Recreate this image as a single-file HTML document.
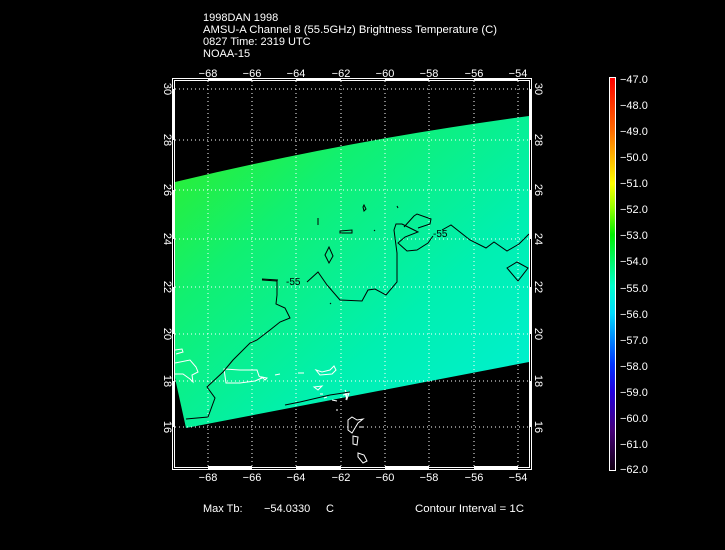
<!DOCTYPE html>
<html><head><meta charset="utf-8"><style>
html,body{margin:0;padding:0;background:#000;}
svg{display:block}
text{font-family:"Liberation Sans",sans-serif;fill:#fff;font-size:11px}
</style></head><body>
<svg width="725" height="550" viewBox="0 0 725 550" xmlns="http://www.w3.org/2000/svg">
<defs>
<linearGradient id="sw" x1="0" y1="0" x2="1" y2="1">
<stop offset="0" stop-color="#33ee22"/>
<stop offset="0.3" stop-color="#11f070"/>
<stop offset="0.65" stop-color="#00f0b0"/>
<stop offset="1" stop-color="#00f0d8"/>
</linearGradient>
<linearGradient id="cb" x1="0" y1="0" x2="0" y2="1">
<stop offset="0" stop-color="#ff0000"/>
<stop offset="0.13" stop-color="#ff6600"/>
<stop offset="0.27" stop-color="#ffff00"/>
<stop offset="0.33" stop-color="#99ff00"/>
<stop offset="0.4" stop-color="#00ee00"/>
<stop offset="0.53" stop-color="#00ffcc"/>
<stop offset="0.6" stop-color="#00ddff"/>
<stop offset="0.73" stop-color="#0033ff"/>
<stop offset="0.8" stop-color="#2200dd"/>
<stop offset="0.9" stop-color="#440077"/>
<stop offset="1" stop-color="#110011"/>
</linearGradient>
</defs>
<text x="203" y="21">1998DAN 1998</text>
<text x="203" y="33" textLength="294" lengthAdjust="spacingAndGlyphs">AMSU-A Channel 8 (55.5GHz) Brightness Temperature (C)</text>
<text x="203" y="45">0827 Time: 2319 UTC</text>
<text x="203" y="57">NOAA-15</text>

<!-- swath -->
<path d="M175,182 Q350,140 529,116 L529,362 L186,428 L175,378 Z" fill="url(#sw)"/>

<!-- grid -->
<g stroke="#fff" stroke-width="1" stroke-dasharray="1,3">
<line x1="208" y1="81" x2="208" y2="466"/><line x1="252" y1="81" x2="252" y2="466"/>
<line x1="296" y1="81" x2="296" y2="466"/><line x1="341" y1="81" x2="341" y2="466"/>
<line x1="385" y1="81" x2="385" y2="466"/><line x1="429" y1="81" x2="429" y2="466"/>
<line x1="474" y1="81" x2="474" y2="466"/><line x1="518" y1="81" x2="518" y2="466"/>
<line x1="175" y1="89" x2="529" y2="89"/><line x1="175" y1="140" x2="529" y2="140"/>
<line x1="175" y1="190" x2="529" y2="190"/><line x1="175" y1="239" x2="529" y2="239"/>
<line x1="175" y1="287" x2="529" y2="287"/><line x1="175" y1="334" x2="529" y2="334"/>
<line x1="175" y1="381" x2="529" y2="381"/><line x1="175" y1="427" x2="529" y2="427"/>
</g>

<!-- coastlines -->
<g fill="none" stroke="#fff" stroke-width="1">
<path d="M175,350 L182,349 L183,352 L176,354 M175,363 L190,360 L196,367 L198,372 L192,375 L193,382 L190,379 L183,374 L175,374"/>
<path d="M224,369 L240,370 L257,370 L259,376 L262,378 L255,381 L240,383 L226,383 Z"/>
<path d="M262,377 L267,378 L265,380 Z M275,375 L280,374 M298,373 L304,373"/>
<path d="M316,370 L322,372 L330,370 L334,366 L336,370 L332,374 L320,375 Z"/>
<path d="M314,387 L322,386 L318,390 Z M324,398 L327,397 M320,394 L323,394 M343,395 L347,394 L346,400 M345,390 L346,392"/>
<path d="M348,420 L352,417 L357,420 L363,419 L358,423 L355,428 L352,433 L348,430 Z M360,427 L363,427 M336,410 L338,410"/>
<path d="M353,436 L358,437 L357,445 L353,444 Z M358,453 L364,455 L367,461 L363,463 L358,457 Z"/>
<path d="M345,393 L349,393 L347,399 Z M332,400 L337,401"/>
</g>

<!-- contours -->
<g fill="none" stroke="#000" stroke-width="1">
<path d="M186,419 L208,417 L215,398 L207,387 L223,372 L233,360 L250,343 L257,340 L270,330 L280,322 L290,318 L285,308 L276,304 L277,295 L277,281 L262,280"/>
<path d="M262,279 L278,280"/>
<path d="M307,282 L318,272 L327,285 L340,300 L362,301 L368,290 L375,289 L386,295 L397,282 L397,253 L394,230 L396,224 L402,224 L410,228 L418,232 L405,237 L398,243 L407,251 L417,250 L428,243 L433,236"/>
<path d="M404,227 L414,216 L417,214 L431,219 L430,224 L418,228"/>
<path d="M442,230 L451,225 L470,240 L486,248 L494,242 L507,251 L519,244 L529,234"/>
<path d="M325,255 L329,247 L333,256 L329,263 Z"/>
<path d="M363,207 L364,205 L366,209 L364,211 Z"/>
<path d="M340,231 L352,230 L352,233 L340,233 Z"/>
<path d="M507,268 L517,262 L528,268 L518,281 Z"/>
<path d="M318,218 L318,225"/>
<path d="M397,206 L398,208 M374,230 L375,231 M330,303 L331,304"/>
<path d="M285,405 L300,402 L330,395 L350,392"/>
</g>
<text x="286" y="285" style="fill:#000;font-size:10px">-55</text>
<text x="433" y="237" style="fill:#000;font-size:10px">-55</text>

<!-- frame -->
<g fill="none" stroke="#fff">
<rect x="172.5" y="78.5" width="359" height="391" stroke-width="1"/>
<rect x="174.5" y="80.5" width="355" height="387" stroke-width="1"/>
</g>
<g fill="#fff">
<rect x="208" y="78" width="44" height="3"/><rect x="296" y="78" width="45" height="3"/><rect x="385" y="78" width="44" height="3"/><rect x="474" y="78" width="44" height="3"/>
<rect x="208" y="466" width="44" height="3"/><rect x="296" y="466" width="45" height="3"/><rect x="385" y="466" width="44" height="3"/><rect x="474" y="466" width="44" height="3"/>
<rect x="172" y="89" width="3" height="51"/><rect x="172" y="190" width="3" height="49"/><rect x="172" y="287" width="3" height="47"/><rect x="172" y="381" width="3" height="46"/>
<rect x="529" y="89" width="3" height="51"/><rect x="529" y="190" width="3" height="49"/><rect x="529" y="287" width="3" height="47"/><rect x="529" y="381" width="3" height="46"/>
</g>

<!-- axis labels -->
<g text-anchor="middle">
<text x="208" y="77">−68</text><text x="252" y="77">−66</text><text x="296" y="77">−64</text><text x="341" y="77">−62</text>
<text x="385" y="77">−60</text><text x="429" y="77">−58</text><text x="474" y="77">−56</text><text x="518" y="77">−54</text>
<text x="208" y="481">−68</text><text x="252" y="481">−66</text><text x="296" y="481">−64</text><text x="341" y="481">−62</text>
<text x="385" y="481">−60</text><text x="429" y="481">−58</text><text x="474" y="481">−56</text><text x="518" y="481">−54</text>
<text transform="translate(164,89) rotate(90)">30</text>
<text transform="translate(164,140) rotate(90)">28</text>
<text transform="translate(164,190) rotate(90)">26</text>
<text transform="translate(164,239) rotate(90)">24</text>
<text transform="translate(164,287) rotate(90)">22</text>
<text transform="translate(164,334) rotate(90)">20</text>
<text transform="translate(164,381) rotate(90)">18</text>
<text transform="translate(164,427) rotate(90)">16</text>
<text transform="translate(535,89) rotate(90)">30</text>
<text transform="translate(535,140) rotate(90)">28</text>
<text transform="translate(535,190) rotate(90)">26</text>
<text transform="translate(535,239) rotate(90)">24</text>
<text transform="translate(535,287) rotate(90)">22</text>
<text transform="translate(535,334) rotate(90)">20</text>
<text transform="translate(535,381) rotate(90)">18</text>
<text transform="translate(535,427) rotate(90)">16</text>
</g>

<!-- colorbar -->
<rect x="609.5" y="77.5" width="6" height="393" fill="url(#cb)" stroke="#fff" stroke-width="1"/>
<g>
<text x="620" y="83">−47.0</text><text x="620" y="109">−48.0</text><text x="620" y="135">−49.0</text>
<text x="620" y="161">−50.0</text><text x="620" y="187">−51.0</text><text x="620" y="213">−52.0</text>
<text x="620" y="239">−53.0</text><text x="620" y="265">−54.0</text><text x="620" y="292">−55.0</text>
<text x="620" y="318">−56.0</text><text x="620" y="344">−57.0</text><text x="620" y="370">−58.0</text>
<text x="620" y="396">−59.0</text><text x="620" y="422">−60.0</text><text x="620" y="448">−61.0</text>
<text x="620" y="473">−62.0</text>
</g>

<text x="203" y="512">Max Tb:</text>
<text x="264" y="512">−54.0330</text>
<text x="326" y="512">C</text>
<text x="415" y="512" textLength="109" lengthAdjust="spacingAndGlyphs">Contour Interval = 1C</text>
</svg>
</body></html>
